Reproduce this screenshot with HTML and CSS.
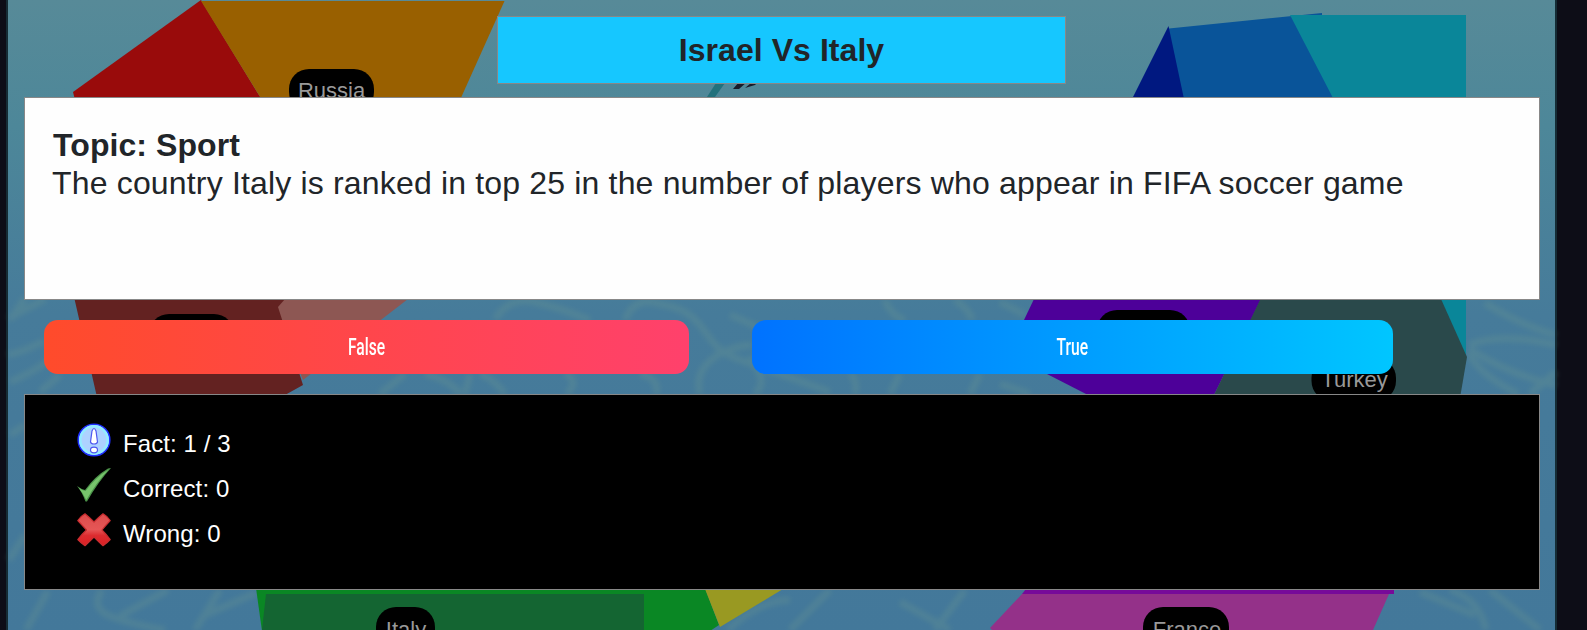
FILE: index.html
```html
<!DOCTYPE html>
<html lang="en">
<head>
<meta charset="utf-8">
<title>Israel Vs Italy</title>
<link rel="stylesheet" href="styles.css">
</head>
<body>
<svg class="map" viewBox="0 0 1587 630" aria-hidden="true">
  <defs>
    <linearGradient id="sea" x1="0" y1="0" x2="0" y2="1">
      <stop offset="0" stop-color="#578a98"/>
      <stop offset=".2" stop-color="#4d8799"/>
      <stop offset=".5" stop-color="#467b9a"/>
      <stop offset="1" stop-color="#43789a"/>
    </linearGradient>
    <filter id="soft" x="-5%" y="-5%" width="110%" height="110%"><feGaussianBlur stdDeviation="2.4"/></filter>
  </defs>
  <rect width="1587" height="630" fill="#0d0d17"/>
  <rect x="7" width="1549" height="630" fill="url(#sea)"/>
  <g class="ripples" filter="url(#soft)">
    <path d="M9 318Q28 308 45 299M8 355Q28 350 44 341M10 382Q45 367 60 350M10 435L25 425M9 560L25 535M10 320L25 298M40 392L60 375"/>
    <path d="M495 319Q510 296 535 302T590 320M625 320Q635 295 660 304C710 312 700 345 735 358T830 392M700 394C692 365 722 347 752 345M755 394Q770 380 748 357M565 374Q580 380 567 394M480 374Q494 379 505 394M640 374Q660 378 656 394M380 394L405 374M470 374L465 394M425 374Q450 380 460 394M730 315Q755 325 762 330M885 300Q890 315 905 320M955 300Q970 310 972 320M850 374Q858 380 855 394M900 374L890 394M970 394L980 374"/>
    <path d="M1000 302L1025 315M1000 384L1030 394M1485 303Q1520 325 1556 335M1469 345Q1500 332 1556 345M1469 349Q1510 375 1556 385M1469 354Q1480 375 1518 394M1530 394L1556 372"/>
    <path d="M26 630L48 591M102 590Q90 608 110 616T165 630M120 616L168 590M195 630L220 590M205 615L256 593M728 630Q760 600 790 600M790 630L830 590M900 602L950 630M935 630L965 590M1420 592L1475 615M1450 590Q1480 600 1486 630M1490 590L1540 630"/>
  </g>
  <path class="rim" d="M7 0V630M1556 0V630"/>

  <path fill="#990b0b" d="M73 92L201 0L262 100H75Z"/>
  <path fill="#996000" d="M201 1H504.500L460 100H262Z"/>
  <path fill="#22717c" d="M707 97H715L725 83H716Z"/>
  <path fill="#171b2a" d="M733 89L739 82H747L739 89ZM745 88L751 83H757L755 85Z"/>
  <path fill="#095499" d="M1169 28.500L1322 13V16L1345 120H1169Z"/>
  <path fill="#001880" d="M1168.500 26L1132 99H1184Z"/>
  <path fill="#0a8699" d="M1290 15H1466V357L1334 100Z"/>

  <path fill="#8d5753" d="M284 299H408L303 380L275 310Z"/>
  <path fill="#632221" d="M74.500 299H285L278 307L303 385L285 395H96.500Z"/>
  <path fill="#4d0099" d="M1034 299H1261L1214 395H1088L1047 374L1024 320Z"/>
  <path fill="#2a494b" d="M1260.500 299H1441L1467 357L1460.500 395H1214Z"/>

  <path fill="#0a8724" d="M256 588H705L719 625L710 631H262Z"/>
  <path fill="#146532" d="M266 594H644V630H262Z"/>
  <path fill="#999922" d="M705 589H783L720 627Z"/>
  <path fill="#770a99" d="M1026 589H1394V594H1022Z"/>
  <path fill="#943189" d="M1022 594H1389L1373 630H992L990 628Z"/>

  <g class="label">
    <rect x="289" y="69" width="85" height="43" rx="20"/><text x="331.500" y="98">Russia</text>
    <rect x="149" y="314" width="85" height="43" rx="20"/>
    <rect x="1097" y="310" width="93" height="43" rx="20"/>
    <rect x="1311.500" y="358" width="84.500" height="43" rx="20"/><text x="1354.500" y="387">Turkey</text>
    <rect x="376" y="607" width="59" height="43" rx="20"/><text x="406" y="636.500">Italy</text>
    <rect x="1143" y="607" width="86" height="43" rx="20"/><text x="1187" y="636.500">France</text>
  </g>
</svg>

<main class="quiz">
  <h1 class="title">Israel Vs Italy</h1>
  <section class="question">
    <strong>Topic: Sport</strong>
    <p>The country Italy is ranked in top 25 in the number of players who appear in FIFA soccer game</p>
  </section>
  <div class="answers">
    <button class="answer no"><span>False</span></button>
    <button class="answer yes"><span>True</span></button>
  </div>
  <section class="score">
    <div class="row">
      <svg class="icon" viewBox="0 0 34 34">
        <circle cx="17" cy="17" r="15.800" fill="#add2ff" stroke="#1f2fff" stroke-width="1.600"/>
        <circle cx="17" cy="17" r="13.700" fill="none" stroke="#94ecff" stroke-width="2.500"/>
        <path d="M15 8Q17 3 19 8L20.500 19Q20 21 17 21T13.500 19Z" fill="#fff" stroke="#5058ef" stroke-width="1.200"/>
        <ellipse cx="17" cy="27" rx="3.500" ry="2.800" fill="#fff" stroke="#5058ef" stroke-width="1.200"/>
      </svg>
      <span>Fact: 1 / 3</span>
    </div>
    <div class="row">
      <svg class="icon" viewBox="0 0 34 34">
        <path d="M0 18Q4 21 8 22Q18 8 31 .500L34 0Q21 14 10 33.500H8.500Q5 24 0 18Z" fill="#4b9249"/>
        <path d="M1.500 19.500Q5 22.500 8.500 23Q19 9 31.500 1.500Q19 15 9.300 32Q6 25 1.500 19.500Z" fill="#77c46c"/>
      </svg>
      <span>Correct: 0</span>
    </div>
    <div class="row">
      <svg class="icon" viewBox="0 0 34 34">
        <defs><linearGradient id="cross" x1="0" y1="0" x2="0" y2="1"><stop offset="0" stop-color="#dc4c4c"/><stop offset=".5" stop-color="#e65656"/><stop offset=".68" stop-color="#dd2c30"/><stop offset="1" stop-color="#dc1f23"/></linearGradient></defs>
        <path d="M8 .8Q12 4 17 9Q22 4 26 .8Q30 3 33.200 7.500Q29 12 25 17Q29 21 33.200 26.500Q30 30 26 32.700Q22 29 17 24Q12 29 8 32.700Q4 30 .8 26.500Q5 21 9.500 17Q5 12 .8 7.500Q4 3 8 .8Z" fill="url(#cross)" stroke="#c92d30" stroke-width="1.200" stroke-linejoin="round"/>
      </svg>
      <span>Wrong: 0</span>
    </div>
  </section>
</main>
</body>
</html>
```
FILE: styles.css
```css
* { box-sizing: border-box; }

body {
  margin: 0;
  height: 630px;
  overflow: hidden;
  background: #0d0d17;
  color: #212529;
  font-family: "Liberation Sans", Arial, sans-serif;
}

.map {
  position: absolute;
  inset: 0;
  width: 1587px;
  height: 630px;
}

.ripples { fill: none; stroke: #6b9690; stroke-width: 7; opacity: .3; }
.rim { fill: none; stroke: #152c35; stroke-width: 2; }
.label text { fill: #999; font-size: 22px; text-anchor: middle; }

.quiz {
  position: relative;
  display: flex;
  flex-direction: column;
  width: 1516px;
  margin-left: 24px;
  padding-top: 16px;
}

.title {
  width: 569px;
  height: 68px;
  margin: 0 0 13px 473px;
  border: 1px solid #888;
  background: #16c7ff;
  font-size: 32px;
  letter-spacing: .06px;
  line-height: 66px;
  text-align: center;
}

.question {
  height: 203px;
  padding: 28px 27px;
  border: 1px solid #888;
  background: #fefefe;
  font-size: 32px;
  line-height: 38px;
}

.question strong { display: block; letter-spacing: .08px; padding-left: 1px; }
.question p { margin: 0; letter-spacing: .17px; white-space: nowrap; }

.answers {
  display: flex;
  gap: 63px;
  margin: 20px 0 20px 20px;
}

.answer {
  width: 645px;
  height: 54px;
  padding: 0;
  border: 0;
  border-radius: 14px;
  color: #fff;
  font: 500 24px/54px Roboto, sans-serif;
}

.answer span { display: inline-block; transform: scaleX(.65); }
.no { background: linear-gradient(to right, #ff4b2b, #ff416c); }
.yes { width: 641px; background: linear-gradient(to right, #0072ff, #00c6ff); }

.score {
  height: 196px;
  padding: 28px 52px;
  border: 1px solid #888;
  background: #000;
  color: #fff;
  font-size: 24px;
  letter-spacing: .1px;
}

.row { display: flex; gap: 12px; height: 44.800px; line-height: 42px; }
.icon { width: 34px; height: 34px; }
```
